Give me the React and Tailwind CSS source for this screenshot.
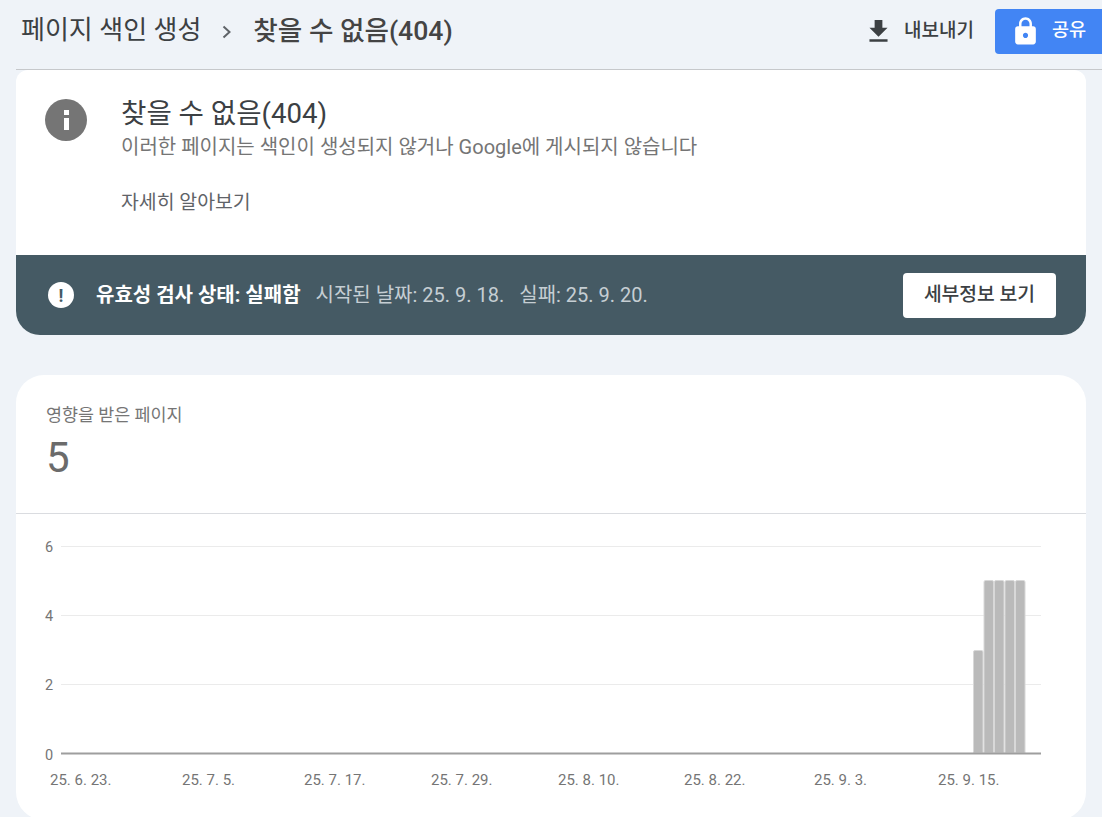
const fontStack = "font-['Roboto','Noto_Sans_CJK_KR',sans-serif]";

const xLabels = [
  { x: 50, text: '25. 6. 23.' },
  { x: 182, text: '25. 7. 5.' },
  { x: 304, text: '25. 7. 17.' },
  { x: 431, text: '25. 7. 29.' },
  { x: 558, text: '25. 8. 10.' },
  { x: 684, text: '25. 8. 22.' },
  { x: 814, text: '25. 9. 3.' },
  { x: 938, text: '25. 9. 15.' },
];

const yLabels = [
  { y: 546, text: '6' },
  { y: 615, text: '4' },
  { y: 684, text: '2' },
];

const bars = [
  { x: 973.5, top: 650.5 },
  { x: 984, top: 580.5 },
  { x: 994.5, top: 580.5 },
  { x: 1005, top: 580.5 },
  { x: 1015.5, top: 580.5 },
];

const Chart = () => {
  // viewBox keeps page coords, easier to read off the screenshot
  return (
    <svg width="1070" height="290" viewBox="16 514 1070 290" className="block">
      {yLabels.map(l => (
        <g key={l.text}>
          <line x1="61" x2="1041" y1={l.y + 0.5} y2={l.y + 0.5} stroke="#ebebeb" />
          <text x="45" y={l.y + 5.5} fontSize="14.5" fill="#757575">
            {l.text}
          </text>
        </g>
      ))}
      {bars.map(b => (
        <path
          key={b.x}
          d={`M${b.x} 753 V${b.top + 1.5} Q${b.x} ${b.top} ${b.x + 1.5} ${b.top} H${b.x + 8} Q${b.x + 9.5} ${b.top} ${b.x + 9.5} ${b.top + 1.5} V753 Z`}
          fill="#bababa"
          stroke="#d8d8d8"
          strokeWidth="1"
        />
      ))}
      <line x1="61" x2="1041" y1="753.5" y2="753.5" stroke="#9e9e9e" strokeWidth="2" />
      <text x="45" y="759.5" fontSize="14.5" fill="#757575">
        0
      </text>
      {xLabels.map(l => (
        <text key={l.text} x={l.x} y="785" fontSize="15" fill="#757575">
          {l.text}
        </text>
      ))}
    </svg>
  );
};

const App = () => {
  return (
    <div className={`h-[817px] w-[1102px] overflow-hidden bg-[#eff3f8] ${fontStack}`}>
      {/* header */}
      <div className="ml-4 flex h-[70px] items-center justify-between border-b border-[#c6c8cb] pb-[7px]">
        <div className="ml-[5px] flex items-center text-[26px] text-[#3c4043]">
          <span>페이지 색인 생성</span>
          <svg width="12" height="14" viewBox="0 0 12 14" className="mr-[20px] ml-[20px] mt-[3px]">
            <path d="M2.5 1.5 8.5 7l-6 5.5" fill="none" stroke="#5f6368" strokeWidth="2" />
          </svg>
          <span className="text-[26.6px] font-medium text-[#444444]">찾을 수 없음(404)</span>
        </div>
        <div className="flex items-center">
          <svg width="31" height="31" viewBox="0 0 24 24" fill="#3c4043">
            <path d="M19 9h-4V3H9v6H5l7 7 7-7zM5 18v2h14v-2H5z" />
          </svg>
          <span className="ml-[10px] text-[19px] font-medium text-[#3c4043]">내보내기</span>
          <div className="ml-[21px] flex h-[45px] w-[107px] items-center rounded-l-[4px] bg-[#4285f4] pl-[15px] text-white">
            <svg width="31" height="31" viewBox="0 0 24 24" fill="white">
              <path d="M18 8h-1V6c0-2.76-2.24-5-5-5S7 3.24 7 6v2H6c-1.1 0-2 .9-2 2v10c0 1.1.9 2 2 2h12c1.1 0 2-.9 2-2V10c0-1.1-.9-2-2-2zm-6 9c-1.1 0-2-.9-2-2s.9-2 2-2 2 .9 2 2-.9 2-2 2zm3.1-9H8.9V6c0-1.71 1.39-3.1 3.1-3.1 1.71 0 3.1 1.39 3.1 3.1v2z" />
            </svg>
            <span className="ml-[11px] text-[18.6px] font-medium">공유</span>
          </div>
        </div>
      </div>

      <div className="mx-4">
        {/* status card */}
        <div className="overflow-hidden rounded-t-[12px] rounded-b-[24px] bg-white">
          <div className="flex h-[185px] pt-[26px] pl-[29px]">
            <div className="mt-[3px] flex h-[42px] w-[42px] items-center justify-center rounded-full bg-[#757575]">
              <div className="flex flex-col items-center gap-[3px]">
                <div className="h-[5px] w-[5px] bg-white" />
                <div className="h-[12px] w-[5px] bg-white" />
              </div>
            </div>
            <div className="ml-[34px]">
              <div className="text-[27.6px] leading-[36px] text-[#3c4043]">찾을 수 없음(404)</div>
              <div className="mt-[1px] text-[20px] leading-[28px] text-[#757575]">
                이러한 페이지는 색인이 생성되지 않거나 Google에 게시되지 않습니다
              </div>
              <div className="mt-[28px] text-[19.4px] leading-[28px] text-[#5f6368]">자세히 알아보기</div>
            </div>
          </div>
          <div className="flex h-[80px] items-center bg-[#455a64] pr-[30px] pl-[32px]">
            <div className="flex h-[26px] w-[26px] items-center justify-center rounded-full bg-white text-[18px] font-bold text-[#455a64]">
              !
            </div>
            <span className="ml-[22px] text-[20px] font-bold text-white">유효성 검사 상태: 실패함</span>
            <span className="ml-[15px] text-[20px] text-[#c5ced3]">시작된 날짜: 25. 9. 18.</span>
            <span className="ml-[15px] text-[20px] text-[#c5ced3]">실패: 25. 9. 20.</span>
            <button className="ml-auto h-[45px] w-[153px] rounded-[4px] bg-white text-[19.3px] font-medium text-[#3c4043]">
              세부정보 보기
            </button>
          </div>
        </div>

        {/* affected pages */}
        <div className="mt-10 h-[445px] overflow-hidden rounded-[28px] bg-white">
          <div className="h-[139px] border-b border-[#dadce0] pt-[28px] pl-[30px]">
            <div className="text-[17.4px] leading-[24px] text-[#757575]">영향을 받은 페이지</div>
            <div className="mt-[6px] text-[42px] leading-[50px] text-[#6b6b6b]">5</div>
          </div>
          <Chart />
        </div>
      </div>
    </div>
  );
};

export default App;
